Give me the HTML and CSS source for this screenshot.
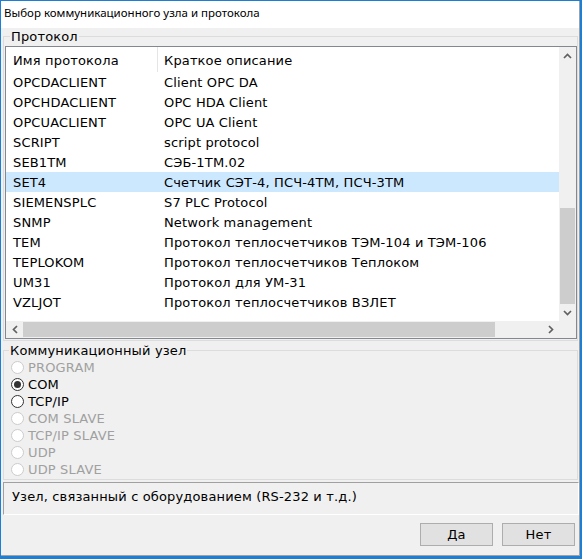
FILE: index.html
```html
<!DOCTYPE html>
<html lang="ru">
<head>
<meta charset="utf-8">
<title>Выбор коммуникационного узла и протокола</title>
<link rel="stylesheet" href="styles.css">
</head>
<body>
<div class="window">
  <div class="frame">
    <div class="titlebar">Выбор коммуникационного узла и протокола</div>

    <fieldset class="group group-protocol">
      <legend>Протокол</legend>
      <div class="listview">
        <div class="lv-main">
          <div class="lv-content">
            <div class="lv-header"><div class="c1">Имя протокола</div><div class="c2">Краткое описание</div></div>
            <div class="lv-row"><div class="c1">OPCDACLIENT</div><div class="c2">Client OPC DA</div></div>
            <div class="lv-row"><div class="c1">OPCHDACLIENT</div><div class="c2">OPC HDA Client</div></div>
            <div class="lv-row"><div class="c1">OPCUACLIENT</div><div class="c2">OPC UA Client</div></div>
            <div class="lv-row"><div class="c1">SCRIPT</div><div class="c2">script protocol</div></div>
            <div class="lv-row"><div class="c1">SEB1TM</div><div class="c2">СЭБ-1ТМ.02</div></div>
            <div class="lv-row selected"><div class="c1">SET4</div><div class="c2">Счетчик СЭТ-4, ПСЧ-4ТМ, ПСЧ-3ТМ</div></div>
            <div class="lv-row"><div class="c1">SIEMENSPLC</div><div class="c2">S7 PLC Protocol</div></div>
            <div class="lv-row"><div class="c1">SNMP</div><div class="c2">Network management</div></div>
            <div class="lv-row"><div class="c1">TEM</div><div class="c2">Протокол теплосчетчиков ТЭМ-104 и ТЭМ-106</div></div>
            <div class="lv-row"><div class="c1">TEPLOKOM</div><div class="c2">Протокол теплосчетчиков Теплоком</div></div>
            <div class="lv-row"><div class="c1">UM31</div><div class="c2">Протокол для УМ-31</div></div>
            <div class="lv-row"><div class="c1">VZLJOT</div><div class="c2">Протокол теплосчетчиков ВЗЛЕТ</div></div>
          </div>
          <div class="vscroll">
            <div class="sb-btn"><svg width="9" height="6" viewBox="0 0 9 6"><path d="M1 5 L4.5 1.5 L8 5" fill="none" stroke="#606060" stroke-width="1.7"/></svg></div>
            <div class="vs-space"></div>
            <div class="vs-thumb"></div>
            <div class="sb-btn"><svg width="9" height="6" viewBox="0 0 9 6"><path d="M1 1 L4.5 4.5 L8 1" fill="none" stroke="#606060" stroke-width="1.7"/></svg></div>
          </div>
        </div>
        <div class="hscroll-row">
          <div class="hscroll">
            <div class="sb-btn"><svg width="6" height="9" viewBox="0 0 6 9"><path d="M5 1 L1.5 4.5 L5 8" fill="none" stroke="#606060" stroke-width="1.7"/></svg></div>
            <div class="hs-thumb"></div>
            <div class="hs-space"></div>
            <div class="sb-btn"><svg width="6" height="9" viewBox="0 0 6 9"><path d="M1 1 L4.5 4.5 L1 8" fill="none" stroke="#606060" stroke-width="1.7"/></svg></div>
          </div>
          <div class="corner"></div>
        </div>
      </div>
    </fieldset>

    <fieldset class="group group-node">
      <legend>Коммуникационный узел</legend>
      <div class="radio disabled"><span class="circle"></span>PROGRAM</div>
      <div class="radio checked"><span class="circle"></span>COM</div>
      <div class="radio"><span class="circle"></span>TCP/IP</div>
      <div class="radio disabled"><span class="circle"></span>COM SLAVE</div>
      <div class="radio disabled"><span class="circle"></span>TCP/IP SLAVE</div>
      <div class="radio disabled"><span class="circle"></span>UDP</div>
      <div class="radio disabled"><span class="circle"></span>UDP SLAVE</div>
    </fieldset>

    <div class="status">Узел, связанный с оборудованием (RS-232 и т.д.)</div>

    <div class="buttons">
      <button class="btn">Да</button>
      <button class="btn">Нет</button>
    </div>
  </div>
</div>
</body>
</html>
```

FILE: styles.css
```css
* { box-sizing: border-box; }
html, body { margin: 0; padding: 0; }
body {
  width: 582px;
  height: 559px;
  font-family: "DejaVu Sans", Verdana, sans-serif;
  font-size: 13px;
  letter-spacing: 0.15px;
  color: #000;
  background: #ffffff;
}
.window {
  width: 582px;
  height: 559px;
  border: 1px solid #1c7fd6;
  border-right-width: 2px;
  border-bottom-width: 3px;
  background: #f0f0f0;
}
.frame {
  height: 100%;
  display: flex;
  flex-direction: column;
  border-right: 1px solid #a0a0a0;
  border-bottom: 1px solid #a0a0a0;
}
.titlebar {
  height: 27px;
  flex: none;
  background: #ffffff;
  font-family: "Noto Sans", "Open Sans", sans-serif;
  font-size: 11.5px;
  letter-spacing: 0;
  line-height: 24px;
  padding-left: 3px;
  white-space: nowrap;
}
.group {
  margin: 0 1px 0 2px;
  padding: 0;
  border: 1px solid #dcdcdc;
  min-width: 0;
  flex: none;
}
.group legend {
  padding: 0 1px;
  margin-left: 5px;
  line-height: 15px;
  font-size: 13px;
}
.group-protocol {
  margin-top: 1px;
  padding: 2px 0 1px 1px;
}
.listview {
  width: 572px;
  height: 293px;
  border: 1px solid #828790;
  background: #ffffff;
  display: flex;
  flex-direction: column;
}
.lv-main {
  height: 274px;
  display: flex;
}
.lv-content {
  width: 553px;
  overflow: hidden;
}
.lv-header, .lv-row {
  display: flex;
  white-space: nowrap;
  line-height: 20px;
}
.lv-header {
  height: 25px;
}
.lv-header .c1 {
  border-right: 1px solid #e5e5e5;
  padding-top: 4px;
}
.lv-header .c2 {
  padding-top: 4px;
}
.lv-row {
  height: 20px;
  padding-top: 1px;
}
.lv-row.selected {
  background: #cce8ff;
}
.c1 {
  width: 152px;
  flex: none;
  padding-left: 7px;
}
.c2 {
  padding-left: 6px;
}
.vscroll {
  width: 17px;
  flex: none;
  background: #f0f0f0;
  display: flex;
  flex-direction: column;
}
.sb-btn {
  width: 17px;
  height: 17px;
  flex: none;
  display: flex;
  align-items: center;
  justify-content: center;
}
.vs-space { height: 144px; flex: none; }
.vs-thumb {
  height: 96px;
  flex: none;
  margin: 0 1px;
  background: #cdcdcd;
}
.hscroll-row {
  height: 17px;
  display: flex;
}
.hscroll {
  width: 553px;
  display: flex;
  background: #f0f0f0;
}
.hs-thumb {
  width: 472px;
  flex: none;
  margin: 1px 0;
  background: #cdcdcd;
}
.hs-space { flex: 1; }
.corner {
  width: 17px;
  background: #f0f0f0;
}
.group-node {
  margin-top: 2px;
  padding: 1px 0 1px 0;
}
.radio {
  height: 17px;
  line-height: 17px;
  display: flex;
  align-items: center;
  white-space: nowrap;
}
.circle {
  width: 13px;
  height: 13px;
  margin-left: 7px;
  margin-right: 4px;
  border: 1px solid #333333;
  border-radius: 50%;
  background: #ffffff;
  flex: none;
  display: flex;
  align-items: center;
  justify-content: center;
}
.radio.checked .circle::after {
  content: "";
  width: 7px;
  height: 7px;
  border-radius: 50%;
  background: #333333;
}
.radio.disabled {
  color: #a0a0a0;
}
.radio.disabled .circle {
  border-color: #cccccc;
  background: #ffffff;
}
.status {
  margin: 2px 0 0 2px;
  height: 33px;
  border-top: 1px solid #a0a0a0;
  border-left: 1px solid #a0a0a0;
  border-bottom: 1px solid #ffffff;
  border-right: 1px solid #ffffff;
  padding-left: 8px;
  line-height: 28px;
  white-space: nowrap;
  flex: none;
}
.buttons {
  flex: 1;
  display: flex;
  justify-content: flex-end;
  align-items: flex-start;
  gap: 9px;
  padding: 8px 4px 0 0;
}
.btn {
  width: 73px;
  height: 23px;
  margin: 0;
  padding: 0;
  border: 1px solid #adadad;
  background: #e1e1e1;
  font-family: "DejaVu Sans", Verdana, sans-serif;
  font-size: 13px;
  letter-spacing: 0.15px;
  color: #000;
}
```
